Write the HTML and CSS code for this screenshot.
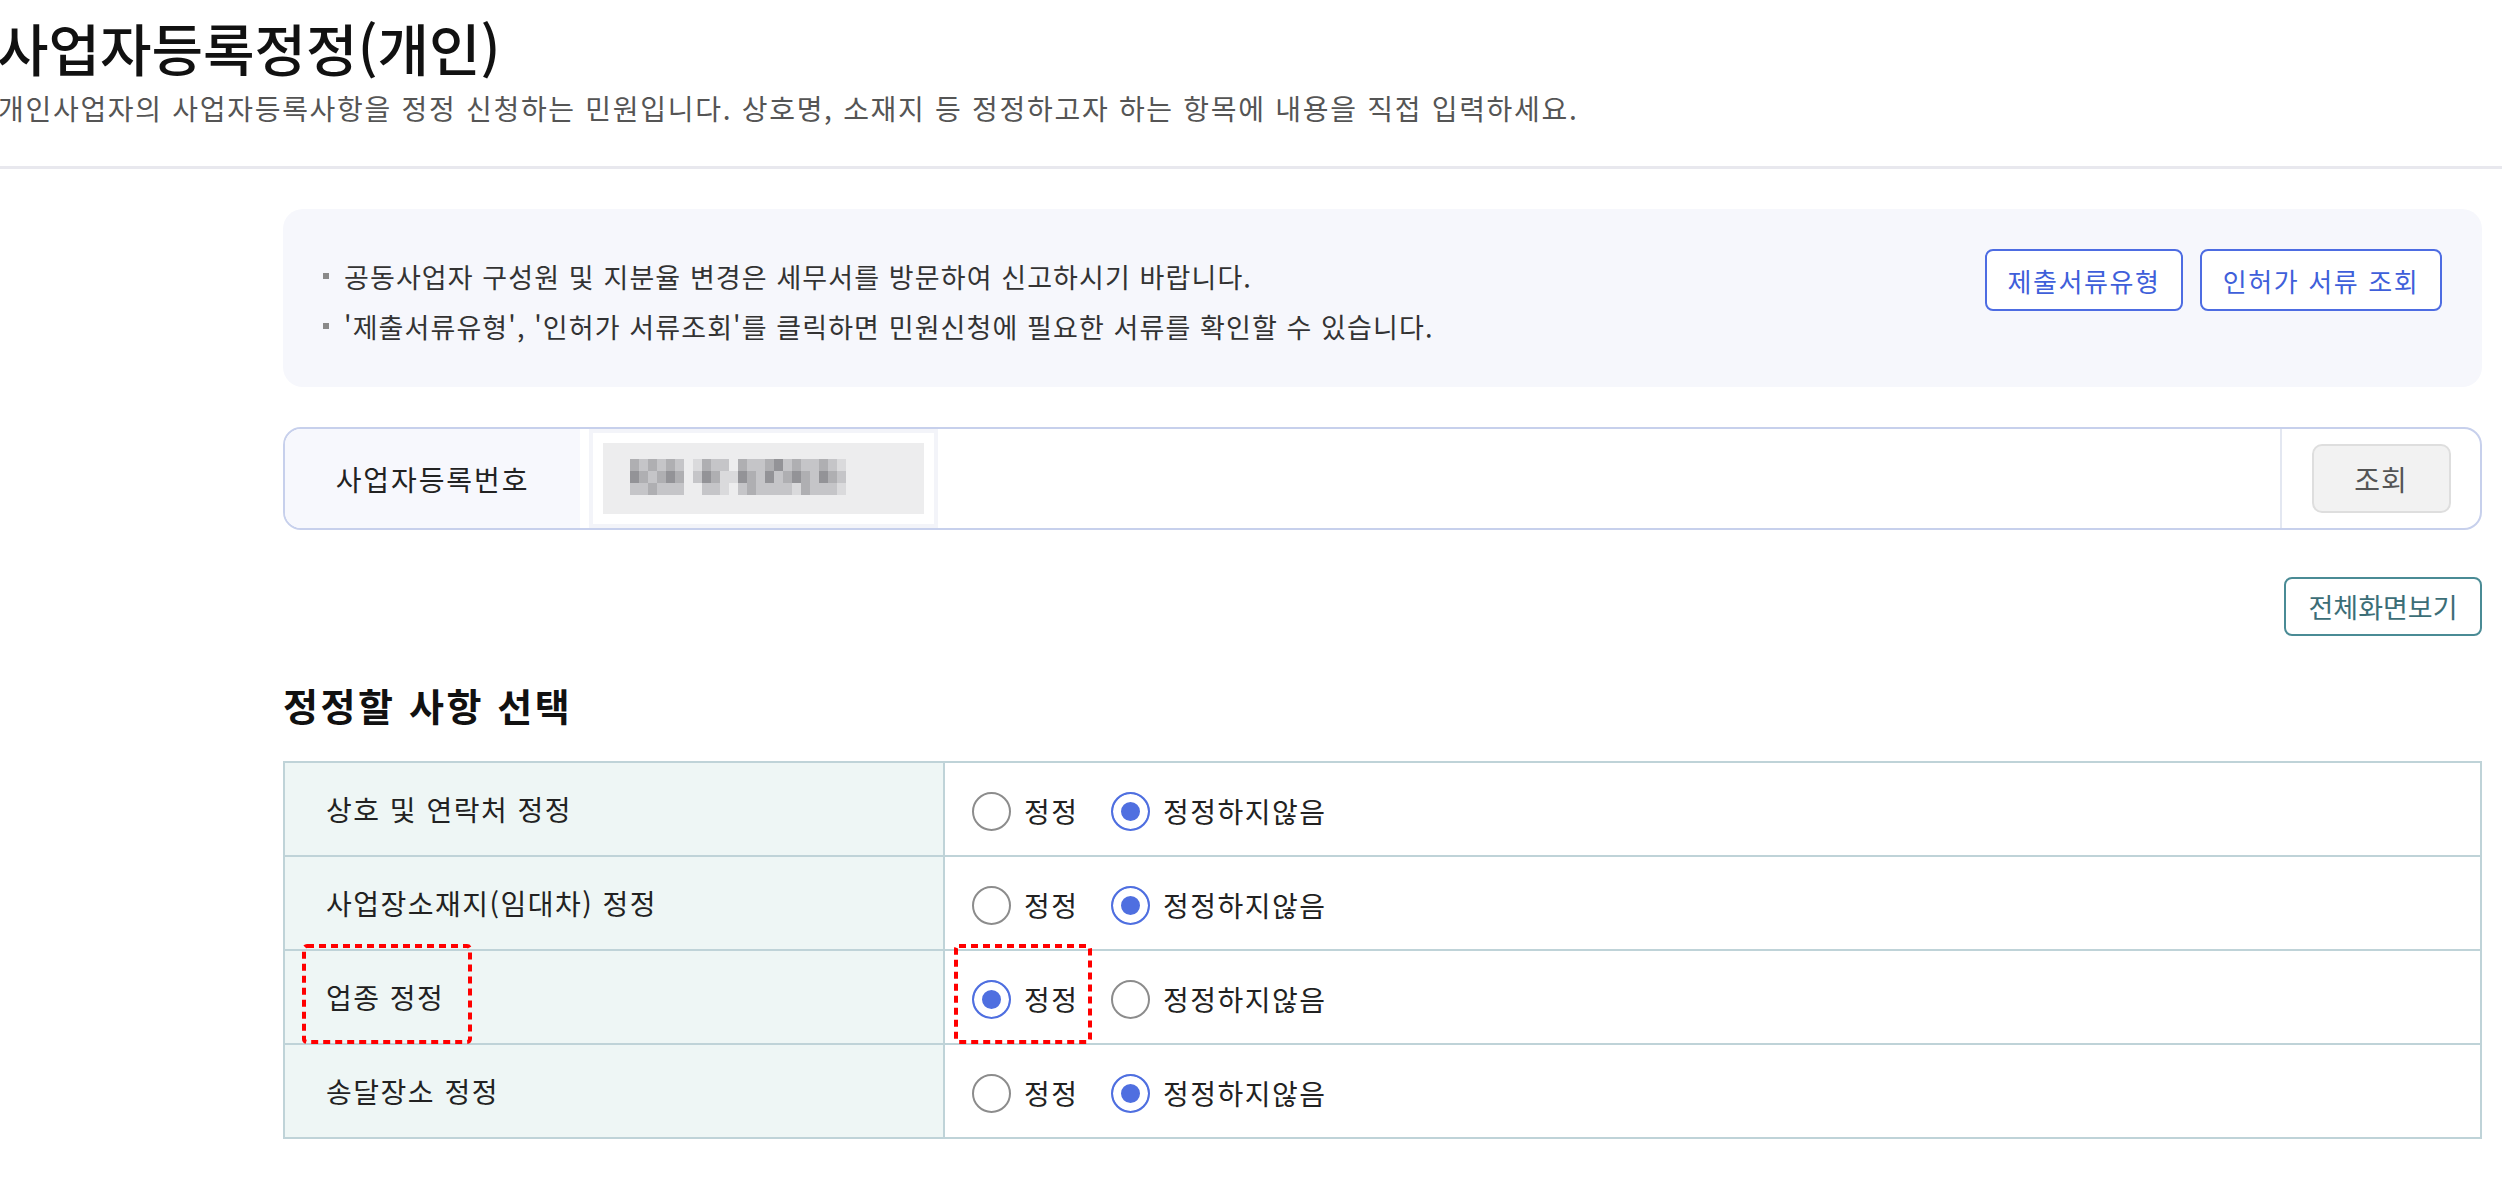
FILE: index.html
```html
<!DOCTYPE html>
<html lang="ko">
<head>
<meta charset="utf-8">
<title>사업자등록정정(개인)</title>
<link rel="stylesheet" href="styles.css">
</head>
<body>
<header class="page-head">
  <h1 class="title">사업자등록정정(개인)</h1>
  <p class="desc">개인사업자의 사업자등록사항을 정정 신청하는 민원입니다. 상호명, 소재지 등 정정하고자 하는 항목에 내용을 직접 입력하세요.</p>
</header>

<main class="content">
  <section class="notice">
    <ul class="notice-list">
      <li>공동사업자 구성원 및 지분율 변경은 세무서를 방문하여 신고하시기 바랍니다.</li>
      <li>'제출서류유형', '인허가 서류조회'를 클릭하면 민원신청에 필요한 서류를 확인할 수 있습니다.</li>
    </ul>
    <div class="notice-actions">
      <button class="btn-outline btn-docs" type="button">제출서류유형</button>
      <button class="btn-outline btn-permit" type="button">인허가 서류 조회</button>
    </div>
  </section>

  <div class="search">
    <div class="search-label">사업자등록번호</div>
    <div class="search-field">
      <div class="blur">
        <svg class="pix" width="216" height="36" viewBox="0 0 216 36" aria-hidden="true">
          <g class="s3"><rect x="0" y="0" width="9" height="12"/><rect x="18" y="0" width="9" height="12"/><rect x="36" y="0" width="9" height="12"/><rect x="72" y="0" width="9" height="12"/><rect x="108" y="0" width="9" height="12"/><rect x="135" y="0" width="9" height="12"/><rect x="162" y="0" width="9" height="12"/><rect x="189" y="0" width="9" height="12"/>
          <rect x="9" y="12" width="9" height="12"/><rect x="27" y="12" width="9" height="12"/><rect x="45" y="12" width="9" height="12"/><rect x="81" y="12" width="9" height="12"/><rect x="117" y="12" width="9" height="12"/><rect x="153" y="12" width="9" height="12"/><rect x="171" y="12" width="9" height="12"/><rect x="198" y="12" width="9" height="12"/>
          <rect x="18" y="24" width="9" height="12"/><rect x="117" y="24" width="9" height="12"/><rect x="171" y="24" width="9" height="12"/></g>
          <g class="s4"><rect x="144" y="0" width="9" height="12"/><rect x="0" y="12" width="9" height="12"/><rect x="36" y="12" width="9" height="12"/><rect x="72" y="12" width="9" height="12"/><rect x="108" y="12" width="9" height="12"/><rect x="135" y="12" width="9" height="12"/><rect x="162" y="12" width="9" height="12"/><rect x="189" y="12" width="9" height="12"/></g>
          <g class="s2"><rect x="9" y="0" width="9" height="12"/><rect x="27" y="0" width="9" height="12"/><rect x="45" y="0" width="9" height="12"/><rect x="81" y="0" width="9" height="12"/><rect x="90" y="0" width="9" height="12"/><rect x="117" y="0" width="9" height="12"/><rect x="126" y="0" width="9" height="12"/><rect x="153" y="0" width="9" height="12"/><rect x="171" y="0" width="9" height="12"/><rect x="180" y="0" width="9" height="12"/><rect x="198" y="0" width="9" height="12"/>
          <rect x="18" y="12" width="9" height="12"/><rect x="63" y="12" width="9" height="12"/><rect x="126" y="12" width="9" height="12"/><rect x="144" y="12" width="9" height="12"/><rect x="180" y="12" width="9" height="12"/><rect x="207" y="12" width="9" height="12"/>
          <rect x="0" y="24" width="9" height="12"/><rect x="9" y="24" width="9" height="12"/><rect x="27" y="24" width="9" height="12"/><rect x="36" y="24" width="9" height="12"/><rect x="45" y="24" width="9" height="12"/><rect x="72" y="24" width="9" height="12"/><rect x="81" y="24" width="9" height="12"/><rect x="108" y="24" width="9" height="12"/><rect x="126" y="24" width="9" height="12"/><rect x="135" y="24" width="9" height="12"/><rect x="144" y="24" width="9" height="12"/><rect x="153" y="24" width="9" height="12"/><rect x="180" y="24" width="9" height="12"/><rect x="189" y="24" width="9" height="12"/><rect x="198" y="24" width="9" height="12"/></g>
          <g class="s1"><rect x="63" y="0" width="9" height="12"/><rect x="207" y="0" width="9" height="12"/><rect x="90" y="12" width="9" height="12"/><rect x="99" y="12" width="9" height="12"/><rect x="90" y="24" width="9" height="12"/><rect x="162" y="24" width="9" height="12"/><rect x="207" y="24" width="9" height="12"/></g>
        </svg>
      </div>
    </div>
    <div class="search-action">
      <button class="btn-gray" type="button">조회</button>
    </div>
  </div>

  <div class="tools">
    <button class="btn-teal" type="button">전체화면보기</button>
  </div>

  <h2 class="section-title">정정할 사항 선택</h2>

  <table class="choice">
    <tbody>
      <tr>
        <th class="choice-label" scope="row">상호 및 연락처 정정</th>
        <td class="choice-opts">
          <label class="opt"><input class="radio" type="radio" name="r1"> 정정</label>
          <label class="opt"><input class="radio" type="radio" name="r1" checked> 정정하지않음</label>
        </td>
      </tr>
      <tr>
        <th class="choice-label" scope="row">사업장소재지(임대차) 정정</th>
        <td class="choice-opts">
          <label class="opt"><input class="radio" type="radio" name="r2"> 정정</label>
          <label class="opt"><input class="radio" type="radio" name="r2" checked> 정정하지않음</label>
        </td>
      </tr>
      <tr>
        <th class="choice-label" scope="row">업종 정정<svg class="mark mark-label" width="170" height="100" viewBox="0 0 170 100" aria-hidden="true"><rect x="2" y="2" width="166" height="96" rx="3"/></svg></th>
        <td class="choice-opts">
          <label class="opt"><input class="radio" type="radio" name="r3" checked> 정정</label>
          <label class="opt"><input class="radio" type="radio" name="r3"> 정정하지않음</label>
          <svg class="mark mark-opt" width="138" height="100" viewBox="0 0 138 100" aria-hidden="true"><rect x="2" y="2" width="134" height="96" rx="3"/></svg>
        </td>
      </tr>
      <tr>
        <th class="choice-label" scope="row">송달장소 정정</th>
        <td class="choice-opts">
          <label class="opt"><input class="radio" type="radio" name="r4"> 정정</label>
          <label class="opt"><input class="radio" type="radio" name="r4" checked> 정정하지않음</label>
        </td>
      </tr>
    </tbody>
  </table>
</main>
</body>
</html>
```

FILE: styles.css
```css
* { box-sizing: border-box; }

html, body {
  margin: 0;
  padding: 0;
  background: #ffffff;
}

body {
  font-family: "Noto Sans CJK KR", "Noto Sans", sans-serif;
  color: #222;
}

/* ---------- header ---------- */
.page-head {
  height: 169px;
  padding-top: 11px;
  border-bottom: 3px solid #e8e8ee;
}

.title {
  margin: 0 0 0 -3px;
  font-size: 56px;
  font-weight: 500;
  line-height: 72px;
  letter-spacing: 0;
  color: #111;
}

.desc {
  margin: 5px 0 0 -2px;
  font-size: 28px;
  line-height: 40px;
  color: #555;
  letter-spacing: 1.7px;
}

/* ---------- content ---------- */
.content {
  margin: 0 20px 0 283px;
  padding-top: 40px;
}

.notice {
  display: flex;
  justify-content: space-between;
  align-items: flex-start;
  min-height: 178px;
  padding: 40px 40px 30px 40px;
  background: #f6f7fc;
  border-radius: 20px;
}

.notice-list {
  list-style: none;
  margin: 3px 0 0 0;
  padding: 0;
}

.notice-list li {
  position: relative;
  padding-left: 21px;
  font-size: 27px;
  line-height: 50px;
  color: #333;
  letter-spacing: 1.1px;
}

.notice-list li::before {
  content: "";
  position: absolute;
  left: 0;
  top: 21px;
  width: 6px;
  height: 6px;
  background: #8a8a8a;
}

.notice-actions {
  display: flex;
  gap: 17px;
}

.btn-outline {
  height: 62px;
  padding: 0;
  font-family: inherit;
  font-size: 26px;
  color: #3f5fda;
  background: #fff;
  border: 2px solid #4d6ce2;
  border-radius: 8px;
  letter-spacing: 1.6px;
}

.btn-docs { width: 198px; }
.btn-permit { width: 242px; }

/* ---------- search ---------- */
.search {
  display: flex;
  height: 103px;
  margin-top: 40px;
  border: 2px solid #c7d0ec;
  border-radius: 18px;
}

.search-label {
  display: flex;
  align-items: center;
  justify-content: center;
  width: 295px;
  background: #f7f8fd;
  border-radius: 16px 0 0 16px;
  font-size: 28px;
  color: #222;
  letter-spacing: 1.9px;
}

.search-field {
  flex: 1;
  display: flex;
  align-items: center;
  padding-left: 23px;
}

.blur {
  position: relative;
  width: 321px;
  height: 71px;
  padding: 16px 0 0 27px;
  background: #ededee;
  box-shadow: 0 0 0 10px #ffffff, 0 0 0 14px #f3f4f9;
}

.pix { display: block; }
.pix .s1 { fill: #dadadc; }
.pix .s2 { fill: #c5c5c8; }
.pix .s3 { fill: #afafb2; }
.pix .s4 { fill: #939397; }

.search-action {
  display: flex;
  align-items: center;
  justify-content: center;
  width: 200px;
  border-left: 2px solid #e3e7f1;
}

.btn-gray {
  width: 139px;
  height: 69px;
  font-family: inherit;
  font-size: 28px;
  color: #555;
  background: #f2f2f2;
  border: 2px solid #dedede;
  border-radius: 10px;
  letter-spacing: 1px;
}

/* ---------- tools ---------- */
.tools {
  display: flex;
  justify-content: flex-end;
  margin-top: 47px;
}

.btn-teal {
  width: 198px;
  height: 59px;
  padding: 0;
  font-family: inherit;
  font-size: 27px;
  color: #3c6e77;
  background: #fff;
  border: 2px solid #4a8b95;
  border-radius: 8px;
  letter-spacing: 0;
}

/* ---------- section ---------- */
.section-title {
  margin: 44px 0 0 0;
  font-size: 38px;
  font-weight: 700;
  line-height: 50px;
  color: #111;
  letter-spacing: 2.6px;
}

.choice {
  width: 100%;
  margin-top: 31px;
  border-collapse: collapse;
  border: 2px solid #bfd3d8;
}

.choice tr {
  height: 94px;
}

.choice th,
.choice td {
  border: 2px solid #bfd3d8;
  padding: 0;
  font-size: 28px;
  font-weight: 400;
  text-align: left;
  vertical-align: middle;
  color: #222;
  letter-spacing: 1.5px;
}

.choice-label {
  position: relative;
  width: 660px;
  padding-left: 41px !important;
  background: #eef6f5;
}

.choice-opts {
  position: relative;
  padding-left: 27px !important;
}

.opt {
  display: inline-flex;
  align-items: center;
  gap: 13px;
  margin-right: 23px;
  vertical-align: middle;
}

.radio {
  appearance: none;
  -webkit-appearance: none;
  width: 39px;
  height: 39px;
  margin: 0;
  border: 2px solid #8c8c8c;
  border-radius: 50%;
  background: #fff;
}

.radio:checked {
  border-color: #4f6fe0;
  background: #4f6fe0;
  box-shadow: inset 0 0 0 8px #fff;
}

/* annotation marks */
.mark {
  position: absolute;
  top: -7px;
  overflow: visible;
}

.mark rect {
  fill: none;
  stroke: #ff0000;
  stroke-width: 4;
  stroke-dasharray: 7 5;
}

.mark-label {
  left: 17px;
}

.mark-opt {
  left: 9px;
}
```
